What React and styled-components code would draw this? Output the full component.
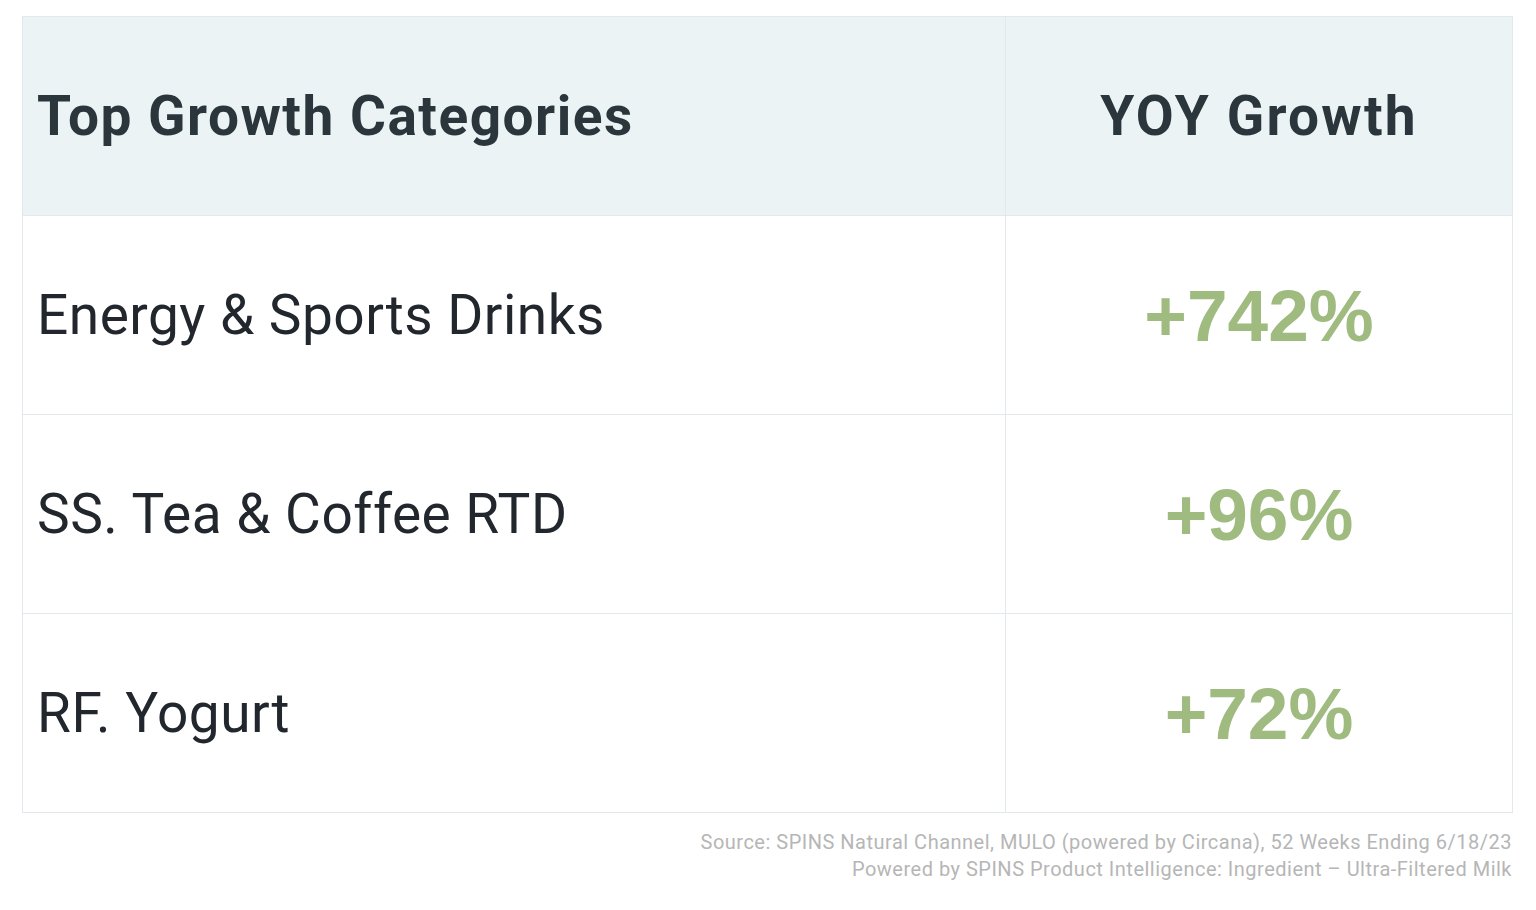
import React from "react";
import styled, { createGlobalStyle } from "styled-components";

const Global = createGlobalStyle`
  html, body { margin: 0; padding: 0; background: #ffffff; }
  body { font-family: Roboto, "Noto Sans", sans-serif; }
`;

const Page = styled.div`
  width: 1536px;
  height: 910px;
  padding: 16px 23px 0 22px;
  box-sizing: border-box;
  display: flex;
  flex-direction: column;
`;

const Table = styled.div`
  display: grid;
  grid-template-columns: 983px 1fr;
  grid-auto-rows: 199px;
  border-top: 1px solid #e3e8ec;
  border-left: 1px solid #e3e8ec;
`;

const Cell = styled.div`
  box-sizing: border-box;
  border-right: 1px solid #e3e8ec;
  border-bottom: 1px solid #e3e8ec;
  background: ${(p) => (p.$head ? "#ebf3f5" : "#ffffff")};
  display: flex;
  align-items: center;
  justify-content: ${(p) => (p.$center ? "center" : "flex-start")};
  padding: 0 14px;
`;

const HeadText = styled.span`
  font-family: Roboto, "Noto Sans", sans-serif;
  font-weight: 700;
  font-size: 55px;
  letter-spacing: ${(p) => (p.$wide ? "2.2px" : "1.5px")};
  color: #2b363c;
  white-space: nowrap;
`;

const Label = styled.span`
  font-family: Roboto, "Noto Sans", sans-serif;
  font-weight: 400;
  font-size: 55px;
  letter-spacing: 0.5px;
  color: #22272e;
  white-space: nowrap;
`;

const Growth = styled.span`
  font-family: "Liberation Sans", Arial, sans-serif;
  font-weight: 700;
  font-size: 73px;
  color: #9fbb80;
  white-space: nowrap;
`;

const Footer = styled.div`
  margin-top: 16px;
  text-align: right;
  font-family: Roboto, "Noto Sans", sans-serif;
  font-size: 20px;
  letter-spacing: 0.5px;
  line-height: 27px;
  color: #b6b6b6;
  padding-right: 1px;
`;

const rows = [
  ["Energy & Sports Drinks", "+742%"],
  ["SS. Tea & Coffee RTD", "+96%"],
  ["RF. Yogurt", "+72%"],
];

export default function App() {
  return (
    <>
      <Global />
      <Page>
        <Table>
          <Cell $head>
            <HeadText>Top Growth Categories</HeadText>
          </Cell>
          <Cell $head $center>
            <HeadText $wide>YOY Growth</HeadText>
          </Cell>
          {rows.map(([name, value]) => (
            <React.Fragment key={name}>
              <Cell>
                <Label>{name}</Label>
              </Cell>
              <Cell $center>
                <Growth>{value}</Growth>
              </Cell>
            </React.Fragment>
          ))}
        </Table>
        <Footer>
          Source: SPINS Natural Channel, MULO (powered by Circana), 52 Weeks Ending 6/18/23
          <br />
          Powered by SPINS Product Intelligence: Ingredient – Ultra-Filtered Milk
        </Footer>
      </Page>
    </>
  );
}
